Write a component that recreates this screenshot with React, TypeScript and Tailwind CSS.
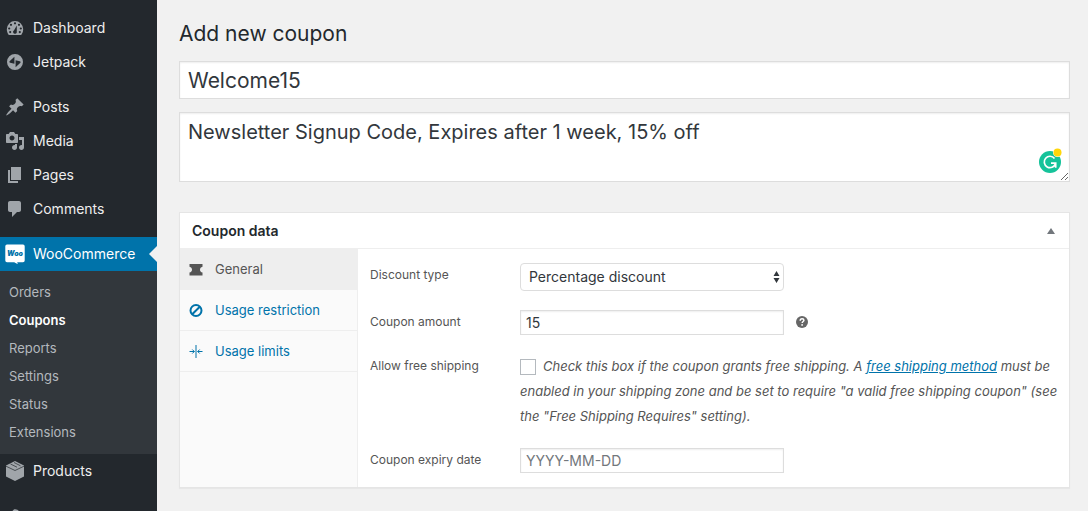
import { useState, type ReactNode } from "react";
import clsx from "clsx";

const Icon = ({ children }: { children: ReactNode }) => (
  <svg viewBox="0 0 20 20" className="h-5 w-5 shrink-0 fill-current" aria-hidden="true">
    {children}
  </svg>
);

const DashboardIcon = () => (
  <Icon>
    <path
      fillRule="evenodd"
      d="M3.8 17h12.4A8 8 0 0 0 18.200 11.200a8.200 8.200 0 0 0-16.400 0c0 2.200.7 4.200 2 5.800zM10 4.200a1.100 1.100 0 1 1 0 2.200 1.100 1.100 0 0 1 0-2.200zM6 5.700a1.100 1.100 0 1 1 0 2.200 1.100 1.100 0 0 1 0-2.200zm8 0a1.100 1.100 0 1 1 0 2.200 1.100 1.100 0 0 1 0-2.200zM4.200 9.400a1.100 1.100 0 1 1 0 2.200 1.100 1.100 0 0 1 0-2.200zm11.600 0a1.100 1.100 0 1 1 0 2.200 1.100 1.100 0 0 1 0-2.200zM11.800 7.500L11.800 13.500a1.900 1.900 0 1 1-2.700-1.300zM5.200 13a1.100 1.100 0 1 1 0 2.200 1.100 1.100 0 0 1 0-2.200zm9.600 0a1.100 1.100 0 1 1 0 2.200 1.100 1.100 0 0 1 0-2.200z"
    />
  </Icon>
);

const JetpackIcon = () => (
  <Icon>
    <path
      fillRule="evenodd"
      d="M10 2a8 8 0 1 0 0 16 8 8 0 0 0 0-16zM9.400 4.700v7.100l-4.200-1c-.7-.2-1-.9-.6-1.500zM10.600 15.300V8.200l4.200 1c.7.2 1 .9.6 1.500z"
    />
  </Icon>
);

const PostsIcon = () => (
  <Icon>
    <path d="M10.44 3.02l1.82-1.82 6.36 6.35-1.83 1.82c-1.05-.68-2.48-.57-3.41.36l-.75.75c-.92.93-1.04 2.35-.35 3.41l-1.83 1.82-2.41-2.41-2.8 2.79c-.42.42-3.38 2.71-3.8 2.29s1.86-3.39 2.28-3.81l2.79-2.79L4.1 9.36l1.83-1.82c1.05.69 2.48.57 3.4-.36l.75-.75c.93-.92 1.05-2.35.36-3.41z" />
  </Icon>
);

const MediaIcon = () => (
  <Icon>
    <path d="M13 11V4c0-.55-.45-1-1-1h-1.67L9 1H5L3.67 3H2c-.55 0-1 .45-1 1v7c0 .55.45 1 1 1h10c.55 0 1-.45 1-1zM7 4.5c1.38 0 2.5 1.12 2.5 2.5S8.38 9.5 7 9.5 4.5 8.38 4.5 7 5.62 4.5 7 4.5zM14 6h5v10.5c0 1.38-1.12 2.5-2.5 2.5S14 17.88 14 16.5s1.12-2.5 2.5-2.5c.17 0 .34.02.5.05V9h-3V6zm-4 8.05V13h2v3.5c0 1.38-1.12 2.5-2.5 2.5S7 17.88 7 16.5 8.12 14 9.5 14c.17 0 .34.02.5.05z" />
  </Icon>
);

const PagesIcon = () => (
  <Icon>
    <path d="M6 15V2h10v13H6zm-1 1h8v2H3V5h2v11z" />
  </Icon>
);

const CommentsIcon = () => (
  <Icon>
    <path d="M5 2h9c1.1 0 2 .9 2 2v7c0 1.1-.9 2-2 2h-2l-5 5v-5H5c-1.1 0-2-.9-2-2V4c0-1.1.9-2 2-2z" />
  </Icon>
);

const WooIcon = () => (
  <Icon>
    <path
      className="fill-white"
      d="M2 .5h16A1.700 1.700 0 0 1 19.700 2.200v14.300a1.700 1.700 0 0 1-1.700 1.700h-5.800l.6 2-3.600-2H2A1.700 1.700 0 0 1 .3 16.500V2.200A1.700 1.700 0 0 1 2 .5z"
    />
    <text
      x="10"
      y="12"
      textAnchor="middle"
      className="fill-[#0073aa] text-[7px] font-black italic"
    >
      Woo
    </text>
  </Icon>
);

const ProductsIcon = () => (
  <Icon>
    <path d="M10 0l9 4.600v10.800L10 20l-9-4.600V4.600z" />
    <path
      d="M1 5.200l9 4.300 9-4.300M5.500 3l6.500 3.200M9 1.500l6.500 3.300"
      className="fill-none stroke-[#23282d] stroke-[.7]"
    />
  </Icon>
);

const AppearanceIcon = () => (
  <Icon>
    <path d="M14.480 11.060L7.410 3.990l1.500-1.500c.5-.56 2.300-.47 3.510.32 1.210.8 1.430 1.280 2.910 2.100 1.180.64 2.450 1.260 4.450.85zm-.71.71L6.700 4.700 4.930 6.470c-.39.39-.39 1.020 0 1.410l1.060 1.060c.39.39.39 1.030 0 1.420-.6.6-1.430 1.110-2.210 1.690-.35.26-.7.53-1.010.84C1.430 14.230.4 16.080 1.400 17.070c.99 1 2.840-.03 4.180-1.360.31-.31.58-.66.85-1.020.57-.78 1.080-1.610 1.690-2.210.39-.39 1.020-.39 1.410 0l1.060 1.060c.39.39 1.020.39 1.410 0z" />
  </Icon>
);

const GeneralIcon = () => (
  <svg viewBox="0 0 14 12" className="h-3 w-3.5 fill-current" aria-hidden="true">
    <path d="M.5 0h13v2.800C11.900 3.200 11 4.400 11 5.700s.9 2.500 2.500 2.900v2.900H.5V8.600C2.100 8.200 3 7 3 5.700S2.100 3.200.5 2.800z" />
  </svg>
);

const RestrictionIcon = () => (
  <svg
    viewBox="0 0 14 14"
    className="h-3.5 w-3.5 fill-none stroke-current stroke-2"
    aria-hidden="true"
  >
    <circle cx="7" cy="6.500" r="5.500" />
    <path d="M3.200 10.300l7.600-7.600" />
  </svg>
);

const LimitsIcon = () => (
  <svg
    viewBox="0 0 14 14"
    className="h-3.5 w-3.5 fill-none stroke-current stroke-1"
    aria-hidden="true"
  >
    <path d="M7 0v13M.5 6.500h4.800M3.300 4.500l2 2-2 2M13.500 6.500H8.700M10.700 4.500l-2 2 2 2" />
  </svg>
);

const mainMenu = [
  [
    { label: "Dashboard", icon: <DashboardIcon /> },
    { label: "Jetpack", icon: <JetpackIcon /> },
  ],
  [
    { label: "Posts", icon: <PostsIcon /> },
    { label: "Media", icon: <MediaIcon /> },
    { label: "Pages", icon: <PagesIcon /> },
    { label: "Comments", icon: <CommentsIcon /> },
  ],
];

const wooMenu = ["Orders", "Coupons", "Reports", "Settings", "Status", "Extensions"];

const tabs = [
  { label: "General", icon: <GeneralIcon /> },
  { label: "Usage restriction", icon: <RestrictionIcon /> },
  { label: "Usage limits", icon: <LimitsIcon /> },
];

const MenuItem = ({ label, icon }: { label: string; icon: ReactNode }) => (
  <li>
    <a href="#" className="flex h-[34px] items-center gap-2 pl-[5px] text-[#eee]">
      <span className="text-[#a0a5aa]">{icon}</span>
      {label}
    </a>
  </li>
);

const Sidebar = () => (
  <nav className="w-[157px] shrink-0 overflow-hidden bg-[#23282d] pt-[11px] text-sm">
    {mainMenu.map((group) => (
      <ul key={group[0].label} className="mb-[11px]">
        {group.map((item) => (
          <MenuItem key={item.label} {...item} />
        ))}
      </ul>
    ))}
    <a
      href="#"
      className="relative flex h-[34px] items-center gap-2 bg-[#0073aa] pl-[5px] text-white"
    >
      <WooIcon />
      WooCommerce
      <span className="absolute top-[9px] right-0 border-8 border-l-0 border-transparent border-r-[#f1f1f1]" />
    </a>
    <ul className="bg-[#32373c] pt-[7px] pb-2 text-[13px]">
      {wooMenu.map((label) => (
        <li key={label}>
          <a
            href="#"
            className={clsx(
              "flex h-7 items-center pl-[9px]",
              label === "Coupons" ? "font-semibold text-white" : "text-[#b4b9be]"
            )}
          >
            {label}
          </a>
        </li>
      ))}
    </ul>
    <ul className="mb-3">
      <MenuItem label="Products" icon={<ProductsIcon />} />
    </ul>
    <ul>
      <MenuItem label="Appearance" icon={<AppearanceIcon />} />
    </ul>
  </nav>
);

const fieldClass =
  "w-full border border-[#ddd] bg-white text-[#32373c] shadow-[inset_0_1px_2px_rgba(0,0,0,0.07)] outline-none";

const CouponForm = () => {
  const [amount, setAmount] = useState("15");
  const [expiry, setExpiry] = useState("");
  const [freeShipping, setFreeShipping] = useState(false);

  return (
    <div className="min-w-0 flex-1 py-3.5 pr-1 pl-3 text-xs text-[#555]">
      <div className="flex">
        <label htmlFor="discount-type" className="w-[150px] shrink-0 pt-1">
          Discount type
        </label>
        <div className="relative w-[264px]">
          <select
            id="discount-type"
            className="h-7 w-full appearance-none rounded-[4px] border border-[#ddd] bg-white px-2 text-sm text-[#32373c] outline-none"
          >
            <option>Percentage discount</option>
            <option>Fixed cart discount</option>
            <option>Fixed product discount</option>
          </select>
          <svg
            viewBox="0 0 7 12"
            className="pointer-events-none absolute top-2 right-1 h-3 w-[7px] fill-[#32373c]"
            aria-hidden="true"
          >
            <path d="M3.500 0l3 5h-6zM3.500 12l3-5h-6z" />
          </svg>
        </div>
      </div>

      <div className="mt-[19px] flex">
        <label htmlFor="coupon-amount" className="w-[150px] shrink-0 pt-1">
          Coupon amount
        </label>
        <div className="w-[264px]">
          <input
            id="coupon-amount"
            type="text"
            value={amount}
            onChange={(e) => setAmount(e.target.value)}
            className={clsx(fieldClass, "h-[25px] px-[5px] text-sm")}
          />
        </div>
        <button type="button" aria-label="Help" className="ml-3 h-6 w-3">
          <svg viewBox="0 0 12 12" className="h-3 w-3" aria-hidden="true">
            <circle cx="6" cy="6" r="6" className="fill-[#666]" />
            <path
              d="M4.200 4.700c0-1.200.8-1.900 1.900-1.900s1.800.6 1.800 1.500c0 1.200-1.700 1.200-1.700 2.600"
              className="fill-none stroke-white stroke-[1.5]"
            />
            <circle cx="6.100" cy="8.900" r=".9" className="fill-white" />
          </svg>
        </button>
      </div>

      <div className="mt-[19px] flex">
        <label htmlFor="free-shipping" className="w-[150px] shrink-0 pt-1">
          Allow free shipping
        </label>
        <p className="text-[13px] leading-[25px] italic">
          <input
            id="free-shipping"
            type="checkbox"
            checked={freeShipping}
            onChange={(e) => setFreeShipping(e.target.checked)}
            className="mr-[7px] h-4 w-4 appearance-none border border-[#b4b9be] bg-white align-middle checked:bg-[#0073aa]"
          />
          Check this box if the coupon grants free shipping. A{" "}
          <a href="#" className="text-[#0073aa] underline">
            free shipping method
          </a>{" "}
          must be enabled in your shipping zone and be set to require "a valid
          free shipping coupon" (see the "Free Shipping Requires" setting).
        </p>
      </div>

      <div className="mt-[19px] flex">
        <label htmlFor="expiry-date" className="w-[150px] shrink-0 pt-1">
          Coupon expiry date
        </label>
        <div className="w-[264px]">
          <input
            id="expiry-date"
            type="text"
            placeholder="YYYY-MM-DD"
            value={expiry}
            onChange={(e) => setExpiry(e.target.value)}
            className={clsx(
              fieldClass,
              "h-[25px] px-[5px] text-sm placeholder:text-[#72777c]"
            )}
          />
        </div>
      </div>
    </div>
  );
};

const GrammarBadge = () => (
  <svg
    viewBox="0 0 24 26"
    className="absolute right-2 bottom-2 h-[26px] w-6"
    aria-hidden="true"
  >
    <circle cx="12" cy="14" r="11" fill="#15c39a" />
    <path
      d="M16.500 10.500A5.700 5.700 0 1 0 17.400 15.700M13 15.200h4.700v4.500"
      fill="none"
      stroke="#fff"
      strokeWidth="1.700"
    />
    <circle cx="19.500" cy="4.500" r="4.500" fill="#fff" />
    <circle cx="19.500" cy="4.500" r="4" fill="#ffd60a" />
  </svg>
);

const App = () => {
  const [code, setCode] = useState("Welcome15");
  const [description, setDescription] = useState(
    "Newsletter Signup Code, Expires after 1 week, 15% off"
  );
  const [activeTab, setActiveTab] = useState("General");

  return (
    <div className="flex h-screen bg-[#f1f1f1] font-['Inter',sans-serif]">
      <Sidebar />
      <main className="min-w-0 flex-1 overflow-auto pt-[18px] pr-[18px] pl-[22px]">
        <h1 className="mb-[11px] text-[21px] leading-8 text-[#23282d]">
          Add new coupon
        </h1>

        <input
          type="text"
          aria-label="Coupon code"
          value={code}
          onChange={(e) => setCode(e.target.value)}
          className={clsx(fieldClass, "block h-[38px] px-2 text-[21px]")}
        />
        <div className="relative mt-[13px]">
          <textarea
            aria-label="Description"
            value={description}
            onChange={(e) => setDescription(e.target.value)}
            spellCheck={false}
            className={clsx(
              fieldClass,
              "block h-[70px] resize-y px-2 py-1 text-xl leading-[30px]"
            )}
          />
          <GrammarBadge />
        </div>

        <section className="mt-[30px] border border-[#e5e5e5] bg-white shadow-[0_1px_1px_rgba(0,0,0,0.04)]">
          <header className="flex h-9 items-center justify-between border-b border-[#eee] px-3">
            <h2 className="text-sm font-semibold text-[#23282d]">Coupon data</h2>
            <button type="button" aria-label="Toggle panel" className="p-0.5">
              <svg viewBox="0 0 8 6" className="h-1.5 w-2 fill-[#72777c]" aria-hidden="true">
                <path d="M4 0l4 6H0z" />
              </svg>
            </button>
          </header>
          <div className="flex">
            <ul className="w-[178px] shrink-0 border-r border-[#eee] bg-[#fafafa] text-[13px]">
              {tabs.map((tab) => (
                <li key={tab.label}>
                  <button
                    type="button"
                    onClick={() => setActiveTab(tab.label)}
                    className={clsx(
                      "flex h-[41px] w-full items-center gap-3 border-b border-[#eee] pt-0.5 pl-[9px]",
                      activeTab === tab.label
                        ? "bg-[#eee] text-[#555]"
                        : "text-[#0073aa]"
                    )}
                  >
                    {tab.icon}
                    {tab.label}
                  </button>
                </li>
              ))}
            </ul>
            <CouponForm />
          </div>
        </section>
      </main>
    </div>
  );
};

export default App;
